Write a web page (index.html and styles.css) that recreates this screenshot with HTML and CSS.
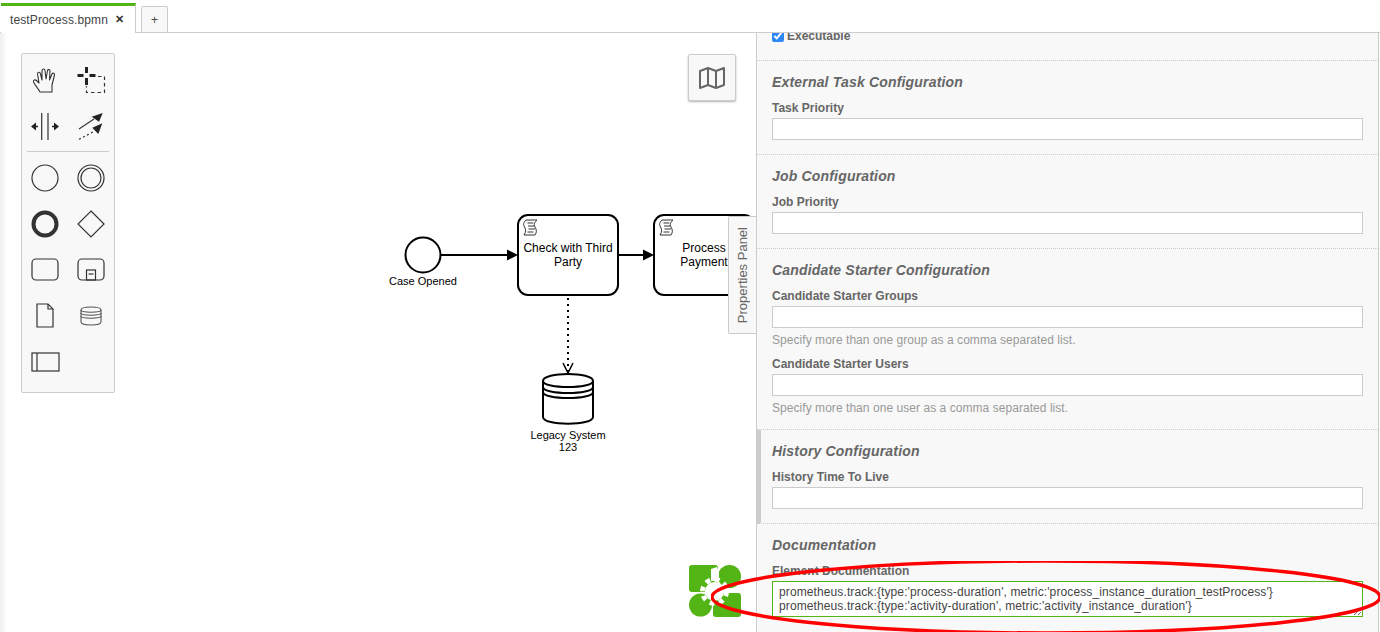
FILE: index.html
```html
<!DOCTYPE html>
<html lang="en">
<head>
    <meta charset="UTF-8">
    <title>testProcess.bpmn</title>
    <link rel="stylesheet" href="styles.css">
</head>
<body>
    <nav class="tabs">
        <div class="tab active">testProcess.bpmn <span class="tab-close">&#10005;</span></div>
        <div class="tab add">+</div>
    </nav>

    <main class="workspace">
        <section class="canvas">
            <svg class="diagram" width="756" height="599" viewBox="0 33 756 599">
                <defs>
                    <g id="script-icon" fill="#fff" stroke="#333" stroke-width="1">
                        <path d="M3 1H14C11.5 3.5 10.5 5.5 12 8c1.500 2.500 2 5 0 8H1C3 13 3 10.500 1.500 8 0 5.500.5 3.500 3 1z"/>
                        <path d="M4.500 4h6M5 7h6.500M5.500 10h6.500M4.500 13h6" fill="none"/>
                    </g>
                </defs>

                <circle cx="423" cy="255" r="17.5" fill="#fff" stroke="#000" stroke-width="2"/>
                <text class="lbl" x="423" y="285">Case Opened</text>

                <path d="M441 255H508" stroke="#000" stroke-width="2"/>
                <path d="M518 255l-11-5.500v11z"/>
                <rect x="518" y="215" width="100" height="80" rx="10" fill="#fff" stroke="#000" stroke-width="2"/>
                <use href="#script-icon" x="523" y="219"/>
                <text class="task" x="568" y="252">Check with Third</text>
                <text class="task" x="568" y="266">Party</text>

                <path d="M619 255H645" stroke="#000" stroke-width="2"/>
                <path d="M654 255l-11-5.500v11z"/>
                <rect x="654" y="215" width="100" height="80" rx="10" fill="#fff" stroke="#000" stroke-width="2"/>
                <use href="#script-icon" x="659" y="219"/>
                <text class="task" x="704" y="252">Process</text>
                <text class="task" x="704" y="266">Payment</text>

                <path d="M568 298V372" stroke="#000" stroke-width="2" stroke-dasharray="2 4"/>
                <path d="M563 363l5 10 5-10" fill="none" stroke="#000" stroke-width="1.5"/>

                <path d="M543 381c0-9.300 50-9.300 50 0v36c0 9-50 9-50 0z" fill="#fff" stroke="#000" stroke-width="2"/>
                <path d="M543 381c0 8 50 8 50 0M543 387c0 8 50 8 50 0M543 392c0 8 50 8 50 0" fill="none" stroke="#000" stroke-width="2"/>
                <text class="lbl" x="568" y="439">Legacy System</text>
                <text class="lbl" x="568" y="451">123</text>
            </svg>

            <div class="palette">
                <div class="tool">
                    <svg width="46" height="46" viewBox="0 0 46 46" fill="none" stroke="#333" stroke-width="1.1" stroke-linejoin="round" stroke-linecap="round">
                        <path d="M18 35C16 31 14 30 11.500 25 11 23 13 22 15 24l2 2-1.500-9c0-2 2.500-2.500 3-0l1.500 6V13.500c.5-2 2.800-2 3 0l1 8.500 1.500-8.500c.5-1.500 2.500-1 2.500.5l-.5 9 2.500-6c.8-1.500 3-1 2.500 1L30 28v7z"/>
                    </svg>
                </div>
                <div class="tool">
                    <svg width="46" height="46" viewBox="0 0 46 46" fill="none">
                        <path d="M17 10h3v6h-3zM17 21h3v7h-3zM9.500 17h6v3h-6zM21.500 17h6v3h-6z" fill="#222"/>
                        <path d="M30 19.500h6.500v16h-18V29" stroke="#333" stroke-width="1.2" stroke-dasharray="3.500 3"/>
                    </svg>
                </div>
                <div class="tool">
                    <svg width="46" height="46" viewBox="0 0 46 46" fill="none">
                        <path d="M19.700 10v27M26 10v27" stroke="#333" stroke-width="1.2"/>
                        <path d="M9 23.500l5-4v8zM37 23.500l-5-4v8z" fill="#222"/>
                        <path d="M13 23.500h3M30 23.500h3" stroke="#222" stroke-width="1.5"/>
                    </svg>
                </div>
                <div class="tool">
                    <svg width="46" height="46" viewBox="0 0 46 46" fill="none">
                        <path d="M11 26l15-10" stroke="#333" stroke-width="1.2"/>
                        <path d="M34.700 10l-11 3.700 7.300 5z" fill="#222"/>
                        <path d="M11 36.300l15-7.800" stroke="#333" stroke-width="1.2" stroke-dasharray="2 2.500"/>
                        <path d="M34.300 20.300l-10 4.400 6 6.300z" fill="#222"/>
                    </svg>
                </div>

                <div class="sep"></div>

                <div class="tool">
                    <svg width="46" height="46" viewBox="0 0 46 46"><circle cx="23" cy="23" r="13" fill="none" stroke="#333" stroke-width="1.2"/></svg>
                </div>
                <div class="tool">
                    <svg width="46" height="46" viewBox="0 0 46 46" fill="none" stroke="#333" stroke-width="1.2"><circle cx="23" cy="23" r="13"/><circle cx="23" cy="23" r="10"/></svg>
                </div>
                <div class="tool">
                    <svg width="46" height="46" viewBox="0 0 46 46"><circle cx="23" cy="23" r="11.5" fill="none" stroke="#333" stroke-width="4"/></svg>
                </div>
                <div class="tool">
                    <svg width="46" height="46" viewBox="0 0 46 46"><path d="M23 10l13 13-13 13-13-13z" fill="none" stroke="#333" stroke-width="1.2"/></svg>
                </div>
                <div class="tool">
                    <svg width="46" height="46" viewBox="0 0 46 46"><rect x="10" y="12" width="26" height="21" rx="4" fill="none" stroke="#333" stroke-width="1.2"/></svg>
                </div>
                <div class="tool">
                    <svg width="46" height="46" viewBox="0 0 46 46" fill="none" stroke="#333" stroke-width="1.2">
                        <rect x="10" y="12" width="26" height="21" rx="4"/>
                        <rect x="18.500" y="23" width="9" height="10"/>
                        <path d="M20.500 27h5"/>
                    </svg>
                </div>
                <div class="tool">
                    <svg width="46" height="46" viewBox="0 0 46 46" fill="none" stroke="#333" stroke-width="1.2">
                        <path d="M15 11h11l5 5v18H15z"/>
                        <path d="M26 11v5h5"/>
                    </svg>
                </div>
                <div class="tool">
                    <svg width="46" height="46" viewBox="0 0 46 46" fill="none" stroke="#555" stroke-width="1.1">
                        <path d="M13 17c0-4 20-4 20 0v12c0 4-20 4-20 0z"/>
                        <path d="M13 17c0 3 20 3 20 0M13 20c0 3 20 3 20 0M13 23c0 3 20 3 20 0"/>
                    </svg>
                </div>
                <div class="tool">
                    <svg width="46" height="46" viewBox="0 0 46 46" fill="none" stroke="#333" stroke-width="1.2">
                        <rect x="10" y="14" width="27" height="18"/>
                        <path d="M15 14v18"/>
                    </svg>
                </div>
            </div>

            <div class="minimap">
                <svg width="26" height="24" viewBox="0 0 26 24" fill="none" stroke="#666" stroke-width="2" stroke-linejoin="round">
                    <path d="M1 5l8-3 8 3 8-3v17l-8 3-8-3-8 3z"/>
                    <path d="M9 2v17M17 5v17"/>
                </svg>
            </div>

            <svg class="logo" width="52" height="52" viewBox="0 0 52 52">
                <rect x="0" y="0" width="29" height="27" rx="3" fill="#52b415"/>
                <circle cx="40.500" cy="11.500" r="11.500" fill="#52b415"/>
                <circle cx="11.500" cy="40" r="11.500" fill="#52b415"/>
                <rect x="24" y="28" width="28" height="24" rx="3" fill="#52b415"/>
                <!-- engranaje blanco entre las piezas -->
                <circle cx="25.500" cy="26.500" r="9.500" fill="#fff"/>
                <circle cx="25.500" cy="26.500" r="12" fill="none" stroke="#fff" stroke-width="5" stroke-dasharray="4.700 4.720"/>
                <path d="M22 4l6-2 2 5v9h-8z" fill="#fff"/>
            </svg>

            <div class="toggle"><span>Properties Panel</span></div>
        </section>

        <aside class="panel">
            <div class="group exec">
                <label class="check"><input type="checkbox" checked> Executable</label>
            </div>

            <div class="group">
                <h3>External Task Configuration</h3>
                <label class="field-label">Task Priority</label>
                <input class="field" type="text">
            </div>

            <div class="group">
                <h3>Job Configuration</h3>
                <label class="field-label">Job Priority</label>
                <input class="field" type="text">
            </div>

            <div class="group">
                <h3>Candidate Starter Configuration</h3>
                <label class="field-label">Candidate Starter Groups</label>
                <input class="field" type="text">
                <p class="help">Specify more than one group as a comma separated list.</p>
                <label class="field-label">Candidate Starter Users</label>
                <input class="field" type="text">
                <p class="help">Specify more than one user as a comma separated list.</p>
            </div>

            <div class="group marked">
                <h3>History Configuration</h3>
                <label class="field-label">History Time To Live</label>
                <input class="field" type="text">
            </div>

            <div class="group last">
                <h3>Documentation</h3>
                <label class="field-label">Element Documentation</label>
                <textarea class="field doc" readonly>prometheus.track:{type:'process-duration', metric:'process_instance_duration_testProcess'}
prometheus.track:{type:'activity-duration', metric:'activity_instance_duration'}</textarea>
            </div>
        </aside>
    </main>

    <!-- marca roja encima de todo -->
    <svg class="mark" width="700" height="90" viewBox="0 0 700 90">
        <ellipse cx="335" cy="36" rx="334" ry="36" fill="none" stroke="#f00" stroke-width="3.5"/>
    </svg>
</body>
</html>
```

FILE: styles.css
```css
* {
    box-sizing: border-box;
}

html, body {
    height: 632px;
    overflow: hidden;
}

body {
    margin: 0;
    font-family: "Liberation Sans", Arial, sans-serif;
    background-color: #fff;
    color: #444;
}

/* tabs */
.tabs {
    display: flex;
    align-items: flex-end;
    height: 33px;
    padding-left: 1px;
    border-bottom: 1px solid #ccc;
}

.tab {
    margin-bottom: -1px;
    font-size: 12px;
    letter-spacing: 0.12px;
    color: #444;
}

.tab.active {
    display: flex;
    align-items: center;
    justify-content: space-between;
    width: 135px;
    height: 30px;
    padding: 0 11px 0 9px;
    background: #fff;
    border-top: 3px solid #52b415;
    border-right: 1px solid #ccc;
}

.tab-close {
    font-size: 11px;
    font-weight: bold;
    color: #333;
}

.tab.add {
    display: flex;
    align-items: center;
    justify-content: center;
    width: 27px;
    height: 26px;
    margin-left: 5px;
    margin-bottom: 0;
    background: #f8f8f8;
    border: 1px solid #ccc;
    border-bottom: 0;
    border-radius: 2px 2px 0 0;
}

/* main area */
.workspace {
    display: flex;
    height: 599px;
}

.canvas {
    position: relative;
    width: 756px;
    flex: none;
    overflow: hidden;
    background: linear-gradient(to right, #eee, #fff 7px);
}

.diagram {
    position: absolute;
    left: 0;
    top: 0;
}

.diagram text {
    font-family: "Liberation Sans", Arial, sans-serif;
    text-anchor: middle;
    fill: #000;
}

.diagram .task {
    font-size: 12px;
}

.diagram .lbl {
    font-size: 11px;
}

.palette {
    position: absolute;
    left: 21px;
    top: 20px;
    display: grid;
    grid-template-columns: 46px 46px;
    width: 94px;
    padding: 3px 0 7px;
    background: #f8f8f8;
    border: 1px solid #ccc;
    border-radius: 2px;
}

.tool {
    height: 46px;
}

.tool svg {
    display: block;
}

.sep {
    grid-column: 1 / 3;
    height: 1px;
    margin: 2px 5px 3px;
    background: #ccc;
}

.minimap {
    position: absolute;
    left: 688px;
    top: 21px;
    display: flex;
    align-items: center;
    justify-content: center;
    width: 48px;
    height: 47px;
    background: #f8f8f8;
    border: 1px solid #ccc;
    border-radius: 2px;
    box-shadow: 0 1px 2px rgba(0, 0, 0, 0.3);
}

.logo {
    position: absolute;
    left: 689px;
    top: 532px;
}

.toggle {
    position: absolute;
    right: 0;
    top: 183px;
    display: flex;
    align-items: center;
    justify-content: center;
    width: 28px;
    height: 118px;
    background: #f8f8f8;
    border: 1px solid #ccc;
    border-right: 0;
    border-radius: 2px 0 0 2px;
}

.toggle span {
    writing-mode: vertical-rl;
    transform: rotate(180deg);
    font-size: 13px;
    color: #666;
}

/* properties panel */
.panel {
    width: 623px;
    flex: none;
    overflow: hidden;
    background: #f8f8f8;
    border-left: 1px solid #ccc;
    border-right: 1px solid #ccc;
}

.group {
    padding: 13px 15px 14px;
    border-bottom: 1px dotted #ccc;
}

.group.exec {
    display: flow-root;
    height: 28px;
    padding: 0 15px;
}

.group.last {
    border-bottom: 0;
}

.group.marked {
    padding-left: 11px;
    border-left: 4px solid #ccc;
}

.check {
    display: flex;
    align-items: center;
    gap: 3px;
    margin-top: -4px;
    font-size: 12px;
    line-height: 14px;
    font-weight: bold;
    color: #666;
}

.check input {
    width: 12px;
    height: 12px;
    margin: 0;
    accent-color: #2f87f5;
}

h3 {
    margin: 0 0 10px;
    font-size: 14px;
    line-height: 17px;
    font-weight: bold;
    font-style: italic;
    letter-spacing: 0.18px;
    color: #666;
}

.field-label {
    display: block;
    margin-bottom: 3px;
    font-size: 12px;
    line-height: 14px;
    font-weight: bold;
    color: #666;
}

.field {
    display: block;
    width: 100%;
    height: 22px;
    margin: 0;
    background: #fff;
    border: 1px solid #ccc;
    border-radius: 0;
    outline: none;
}

.help {
    margin: 5px 0 10px;
    font-size: 12px;
    line-height: 14px;
    letter-spacing: 0.05px;
    color: #999;
}

.help:last-child {
    margin-bottom: 0;
}

.doc {
    height: 36px;
    padding: 3px 6px;
    font-family: "Liberation Sans", Arial, sans-serif;
    font-size: 12px;
    line-height: 14px;
    letter-spacing: 0.11px;
    color: #444;
    border-color: #52b415;
    overflow: hidden;
}

.mark {
    position: absolute;
    left: 711px;
    top: 561px;
    pointer-events: none;
}
```
